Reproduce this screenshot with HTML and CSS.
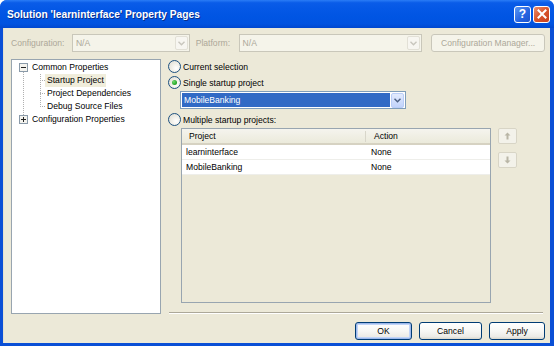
FILE: index.html
```html
<!DOCTYPE html>
<html>
<head>
<meta charset="utf-8">
<title>Solution 'learninterface' Property Pages</title>
<link rel="stylesheet" href="styles.css">
</head>
<body>
<div class="window">
  <div class="titlebar">
    <span class="title">Solution 'learninterface' Property Pages</span>
    <div class="caption-buttons">
      <span class="cap-btn help">?</span>
      <span class="cap-btn close"><svg width="10" height="10" viewBox="0 0 10 10"><path d="M1.5 1.5 L8.5 8.5 M8.5 1.5 L1.5 8.5" stroke="#fff" stroke-width="2" stroke-linecap="square"/></svg></span>
    </div>
  </div>
  <div class="frame">
    <div class="config-row">
      <span class="lbl lbl-config">Configuration:</span>
      <div class="combo disabled combo-config"><span class="combo-text">N/A</span><span class="drop"><svg width="7" height="5" viewBox="0 0 7 5"><path d="M0.5 0.8 L3.5 3.8 L6.5 0.8" fill="none" stroke="#c8c6bd" stroke-width="1.4"/></svg></span></div>
      <span class="lbl lbl-platform">Platform:</span>
      <div class="combo disabled combo-platform"><span class="combo-text">N/A</span><span class="drop"><svg width="7" height="5" viewBox="0 0 7 5"><path d="M0.5 0.8 L3.5 3.8 L6.5 0.8" fill="none" stroke="#c8c6bd" stroke-width="1.4"/></svg></span></div>
      <span class="btn disabled cfg-mgr">Configuration Manager...</span>
    </div>
    <div class="main">
      <div class="tree">
        <div class="tree-body">
          <div class="tree-row">
            <span class="expander"><svg width="9" height="9" viewBox="0 0 9 9"><rect x="0.5" y="0.5" width="8" height="8" fill="#f4f3ee" stroke="#8a9aa9"/><path d="M2 4.5 H7" stroke="#222" stroke-width="1"/></svg></span>
            <span class="node-text">Common Properties</span>
          </div>
          <div class="children">
            <div class="tree-row child"><span class="connector"></span><span class="node-text selected">Startup Project</span></div>
            <div class="tree-row child"><span class="connector"></span><span class="node-text">Project Dependencies</span></div>
            <div class="tree-row child"><span class="connector"></span><span class="node-text">Debug Source Files</span></div>
          </div>
          <div class="tree-row">
            <span class="expander"><svg width="9" height="9" viewBox="0 0 9 9"><rect x="0.5" y="0.5" width="8" height="8" fill="#f4f3ee" stroke="#8a9aa9"/><path d="M2 4.5 H7 M4.5 2 V7" stroke="#222" stroke-width="1"/></svg></span>
            <span class="node-text">Configuration Properties</span>
          </div>
        </div>
      </div>
      <div class="pane">
        <label class="radio-row r1"><span class="radio"></span><span>Current selection</span></label>
        <label class="radio-row r2"><span class="radio checked"></span><span>Single startup project</span></label>
        <div class="combo active combo-startup"><span class="combo-sel">MobileBanking</span><span class="drop"><svg width="7" height="5" viewBox="0 0 7 5"><path d="M0.5 0.8 L3.5 3.8 L6.5 0.8" fill="none" stroke="#4d6185" stroke-width="1.5"/></svg></span></div>
        <label class="radio-row r3"><span class="radio"></span><span>Multiple startup projects:</span></label>
        <div class="grid-area">
          <div class="grid">
            <div class="grid-head">
              <span class="col col-project">Project</span>
              <span class="col col-action">Action</span>
            </div>
            <div class="grid-row"><span class="col col-project">learninterface</span><span class="col col-action">None</span></div>
            <div class="grid-row"><span class="col col-project">MobileBanking</span><span class="col col-action">None</span></div>
          </div>
          <div class="move-buttons">
            <span class="move-btn"><svg width="7" height="8" viewBox="0 0 7 8"><path d="M3.5 0.5 L6.5 3.5 H4.5 V7.5 H2.5 V3.5 H0.5 Z" fill="#b9b6a6"/></svg></span>
            <span class="move-btn down"><svg width="7" height="8" viewBox="0 0 7 8"><path d="M3.5 7.5 L6.5 4.5 H4.5 V0.5 H2.5 V4.5 H0.5 Z" fill="#b9b6a6"/></svg></span>
          </div>
        </div>
        <div class="sep"></div>
      </div>
    </div>
    <div class="footer">
      <span class="btn default w-ok">OK</span>
      <span class="btn w-cancel">Cancel</span>
      <span class="btn w-apply">Apply</span>
    </div>
  </div>
</div>
</body>
</html>
```

FILE: styles.css
```css
* { box-sizing: border-box; }
html, body { margin: 0; padding: 0; background: #fff; }
body {
  width: 554px; height: 346px; overflow: hidden;
  font-family: "Liberation Sans", Arial, sans-serif;
  font-size: 8.6px; color: #000;
}
.window {
  width: 554px; height: 346px;
  display: flex; flex-direction: column;
  background: #0a4fd6;
  border-radius: 7px 7px 0 0;
  overflow: hidden;
}
.titlebar {
  height: 28px; flex: none;
  display: flex; align-items: center; justify-content: space-between;
  padding: 0 4px 0 7px;
  background: linear-gradient(#2a7cf6 0%, #0a5ce8 10%, #0558e6 30%, #0055e3 60%, #0153e0 85%, #0048cf 100%);
}
.title {
  color: #fff; font-weight: bold; font-size: 10.2px;
  text-shadow: 1px 1px 0 #0a2e8a;
  padding-top: 1px;
}
.caption-buttons { display: flex; gap: 2px; }
.cap-btn {
  width: 17px; height: 17px; border: 1px solid #fff; border-radius: 3px;
  display: flex; align-items: center; justify-content: center;
  color: #fff; font-weight: bold; font-size: 12px;
}
.help { background: linear-gradient(135deg, #5c98f4, #2563e0 60%, #1d52cc); }
.close { background: linear-gradient(135deg, #e98e6f, #d9542b 50%, #c6401e); }

.frame {
  flex: 1;
  margin: 0 4px 3px 3px;
  background: #ece9d8;
  padding: 6px 5px 0 7px;
  display: flex; flex-direction: column;
  border-left: 1px solid #e4e1cf;
}
.config-row { display: flex; align-items: center; height: 18px; }
.lbl { color: #aca899; }
.lbl-config { width: 61px; }
.lbl-platform { width: 43px; margin-left: 6px; }
.combo {
  height: 18px; display: flex; align-items: center;
  border: 1px solid #c9c7ba; background: #f5f4ea;
  padding: 1px;
}
.combo-text { flex: 1; color: #aca899; padding-left: 2px; }
.combo .drop {
  width: 13px; height: 14px; display: flex; align-items: center; justify-content: center;
  border: 1px solid #e2e0d6; background: #f7f6f1; border-radius: 2px;
}
.combo-config { width: 118px; }
.combo-platform { width: 184px; }
.btn {
  height: 18px; display: flex; align-items: center; justify-content: center;
  border: 1px solid #003c74; border-radius: 3px;
  background: linear-gradient(#ffffff 0%, #f7f7f4 50%, #ecebe6 85%, #d8d6cc 100%);
}
.btn.disabled { border-color: #c9c7ba; color: #aca899; background: #f5f4ea; }
.cfg-mgr { width: 114px; margin-left: 9px; }

.main { display: flex; margin-top: 7px; height: 255px; }
.tree {
  width: 150px; flex: none; height: 255px;
  border: 1px solid #98a5b0; background: #fff;
  padding: 1px 0 0 7px;
}
.tree-body { position: relative; }
.tree-body::before {
  content: ""; position: absolute; left: 4px; top: 10px; height: 52px;
  border-left: 1px dotted #b0b0b0;
}
.tree-row { height: 13px; display: flex; align-items: center; position: relative; }
.expander { width: 9px; height: 9px; display: flex; margin-right: 3px; position: relative; z-index: 1; background: #fff; }
.node-text { padding: 0 1px; line-height: 11px; height: 11px; }
.node-text.selected { background: #f0eddb; outline: 1px solid #f0eddb; }
.children { position: relative; margin-left: 21px; padding-left: 6px; }
.children::before {
  content: ""; position: absolute; left: 0; top: 0; height: 33px;
  border-left: 1px dotted #b0b0b0;
}
.connector {
  position: absolute; left: -6px; top: 6px; width: 5px;
  border-top: 1px dotted #b0b0b0;
}

.pane {
  flex: 1; margin-left: 7px; display: flex; flex-direction: column;
  padding-top: 1px;
}
.radio-row { display: flex; align-items: center; height: 13px; gap: 2px; }
.radio {
  width: 13px; height: 13px; border-radius: 50%;
  border: 1px solid #1c5180;
  background: radial-gradient(circle at 65% 65%, #ffffff 0%, #f2f1ea 40%, #dcdad0 100%);
  display: flex; align-items: center; justify-content: center;
}
.radio.checked::after {
  content: ""; width: 5px; height: 5px; border-radius: 50%;
  background: radial-gradient(circle at 35% 35%, #6fdc6f, #21a121 70%);
}
.r2 { margin-top: 3px; }
.combo.active {
  width: 226px; height: 18px; margin: 2px 0 0 12px;
  border-color: #7f9db9; background: #fff;
}
.combo-sel {
  flex: 1; height: 14px; background: #316ac5; color: #fff;
  padding-left: 2px; line-height: 14px; margin-right: 1px;
}
.combo.active .drop {
  background: linear-gradient(#e3ebfd, #c1d3fb);
  border-color: #b9cdf7;
  height: 15px;
}
.r3 { margin-top: 4px; }
.grid-area { display: flex; margin: 2px 0 0 13px; }
.grid {
  width: 310px; height: 175px;
  border: 1px solid #98a5b0; background: #ece9d8;
}
.grid-head {
  height: 16px; display: flex; align-items: center;
  background: linear-gradient(#f5f4ee, #ebeadb);
  border-bottom: 2px solid #d6d2c2;
}
.grid-head .col-project { border-right: 1px solid #d8d6ca; height: 11px; line-height: 11px; }
.col { padding-left: 7px; }
.col-project { width: 184px; }
.col-action { flex: 1; padding-left: 7px; }
.grid-head .col-action { padding-left: 8px; }
.grid-row {
  height: 15px; display: flex; align-items: center; background: #fff;
  border-bottom: 1px solid #eeeeea;
}
.grid-row .col-project { padding-left: 4px; }
.grid-row .col-action { padding-left: 5px; }
.move-buttons { display: flex; flex-direction: column; gap: 8px; margin-left: 7px; }
.move-btn {
  width: 19px; height: 16px; border: 1px solid #d8d5c6; border-radius: 2px;
  background: #f3f2ea; display: flex; align-items: center; justify-content: center;
}
.sep {
  margin-top: auto; height: 2px; width: 374px; margin-left: 1px;
  border-top: 1px solid #aca899; border-bottom: 1px solid #fff;
}

.footer { display: flex; justify-content: flex-end; margin-top: 8px; }
.footer .btn + .btn { margin-left: 7px; }
.footer .w-apply { margin-left: 4px; }
.btn.default { box-shadow: inset 0 0 0 1px #9db9eb, inset 0 0 0 2px #c1d4f7; }
.w-ok { width: 57px; }
.w-cancel { width: 63px; }
.w-apply { width: 56px; }
```
